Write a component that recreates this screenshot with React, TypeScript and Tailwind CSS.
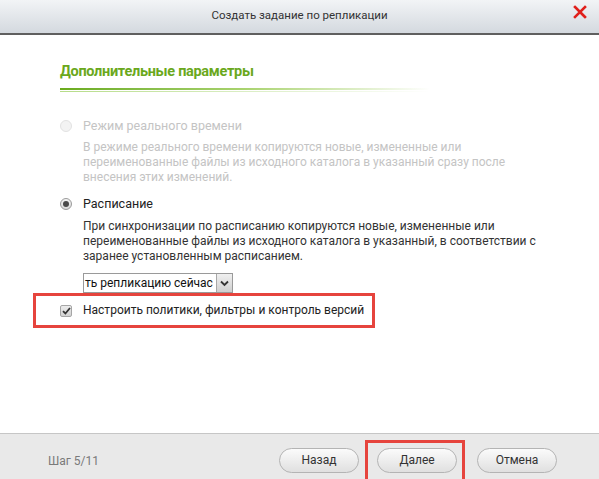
import React from "react";

const font = { fontFamily: "Roboto, 'Liberation Sans', sans-serif" };

function Radio({ checked, disabled }: { checked?: boolean; disabled?: boolean }) {
  return (
    <span
      className={
        "w-[12px] h-[12px] rounded-full border flex items-center justify-center " +
        (disabled
          ? "border-[#e2e2e2] bg-[#f3f3f3]"
          : "border-[#9a9a9a] bg-gradient-to-b from-[#f4f4f4] to-[#d9d9d9]")
      }
    >
      {checked && <span className="w-[6px] h-[6px] rounded-full bg-[#4a4a4a]" />}
    </span>
  );
}

function Button({ label }: { label: string }) {
  return (
    <button className="w-[80px] h-[25px] rounded-full border border-[#b4b4b4] bg-gradient-to-b from-[#fbfbfb] to-[#e0e0e0] text-[12px] text-[#333]">
      {label}
    </button>
  );
}

export default function App() {
  return (
    <div className="w-[599px] h-[479px] flex flex-col bg-white overflow-hidden" style={font}>
      {/* title bar */}
      <div className="h-[35px] shrink-0 relative flex items-center justify-center bg-gradient-to-b from-[#f2f4f6] to-[#d4d9df] border-b-2 border-[#5f5f5f]">
        <span className="text-[11.5px] text-[#333] -mt-[2px]">Создать задание по репликации</span>
        <svg className="absolute right-[12px] top-[5px]" width="14" height="14" viewBox="0 0 14 14">
          <path d="M2 2 L12 12 M12 2 L2 12" stroke="#e0201b" strokeWidth="2.6" strokeLinecap="square" />
        </svg>
      </div>

      {/* content */}
      <div className="flex-1 flex flex-col pl-[60px] pt-[27px]">
        <h2 className="text-[14.5px] leading-[20px] font-bold tracking-[-0.3px] text-[#6aa81c]">
          Дополнительные параметры
        </h2>
        <div className="mt-[6px] w-[370px] h-[2px] bg-gradient-to-r from-[#6aab1b] via-[#a9d36f] to-transparent" />
        <div className="mt-[1px] w-[370px] h-[1px] bg-gradient-to-r from-[#b6dc88] to-transparent" />

        <div className="mt-[26px] flex flex-col text-[12px] leading-[15px] whitespace-nowrap">
          <div className="flex items-center gap-[11px]">
            <Radio disabled />
            <span className="text-[12.5px] text-[#c4c4c4]">Режим реального времени</span>
          </div>
          <p className="mt-[7px] ml-[23px] text-[#c4c4c4]">
            В режиме реального времени копируются новые, измененные или
            <br />
            переименованные файлы из исходного каталога в указанный сразу после
            <br />
            внесения этих изменений.
          </p>

          <div className="mt-[11px] flex items-center gap-[11px]">
            <Radio checked />
            <span className="text-[12.5px] text-[#222]">Расписание</span>
          </div>
          <p className="mt-[8px] ml-[23px] text-[#333]">
            При синхронизации по расписанию копируются новые, измененные или
            <br />
            переименованные файлы из исходного каталога в указанный, в соответствии с
            <br />
            заранее установленным расписанием.
          </p>

          <div className="mt-[9px] ml-[23px] w-[150px] h-[20px] flex border border-[#9a9a9a] bg-white">
            <div className="flex-1 overflow-hidden whitespace-nowrap pl-[1px] text-[12px] leading-[18px] text-[#111]">
              ть репликацию сейчас
            </div>
            <div className="w-[16px] flex items-center justify-center border-l border-[#a8a8a8] bg-gradient-to-b from-[#f0f0f0] to-[#cfcfcf]">
              <svg width="9" height="7" viewBox="0 0 9 7">
                <path d="M1 1.5 L4.5 5 L8 1.5" stroke="#333" strokeWidth="1.8" fill="none" />
              </svg>
            </div>
          </div>

          <div className="-ml-[27px] w-[342px] h-[35px] flex items-center gap-[11px] pl-[24px] border-[3px] border-[#e6443d]">
            <span className="w-[12px] h-[12px] rounded-[2px] border border-[#a6a6a6] bg-gradient-to-b from-[#ececec] to-[#d2d2d2] flex items-center justify-center">
              <svg width="9" height="8" viewBox="0 0 9 8">
                <path d="M1 4.2 L3.4 6.5 L8 1" stroke="#333" strokeWidth="1.8" fill="none" />
              </svg>
            </span>
            <span className="text-[12px] text-[#222]">Настроить политики, фильтры и контроль версий</span>
          </div>
        </div>
      </div>

      {/* footer */}
      <div className="h-[46px] shrink-0 flex items-start border-t border-[#c6c6c6] bg-[#e9e9e9] pl-[48px] pr-[42px] pt-[6px]">
        <span className="mt-[13px] text-[12px] leading-[16px] text-[#7a7a7a]">Шаг 5/11</span>
        <div className="ml-auto flex items-start">
          <div className="mt-[7px]">
            <Button label="Назад" />
          </div>
          <div className="ml-[6px] h-[39px] w-[100px] border-[3px] border-b-0 border-[#e6443d] pl-[9px] pt-[4px]">
            <Button label="Далее" />
          </div>
          <div className="ml-[12px] mt-[7px]">
            <Button label="Отмена" />
          </div>
        </div>
      </div>
    </div>
  );
}
